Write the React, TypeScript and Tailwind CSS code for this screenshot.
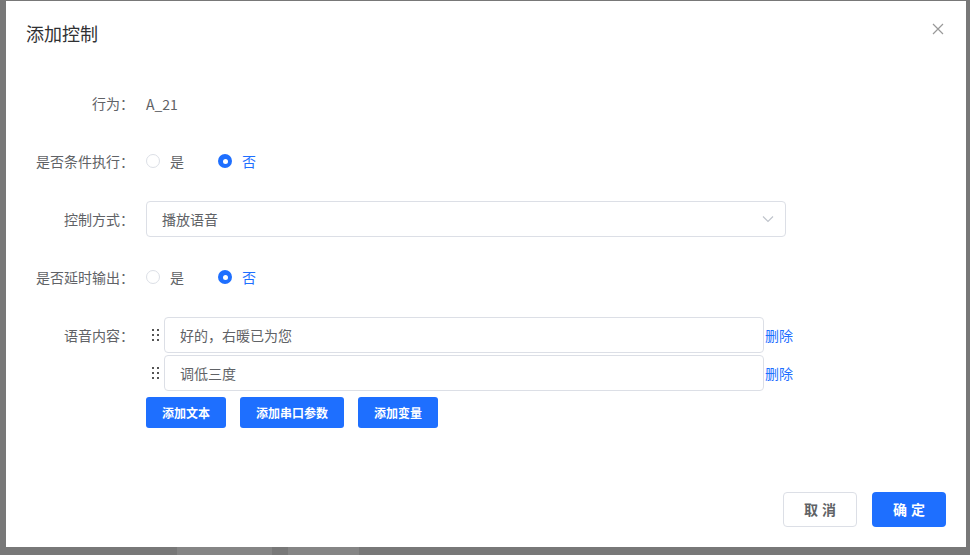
import { useState } from "react";

const font = { fontFamily: '"Noto Sans CJK SC", "Noto Sans", sans-serif' };

function Radio({ checked, label }: { checked: boolean; label: string }) {
  return (
    <label className="flex items-center mr-[34px] cursor-pointer">
      {checked ? (
        <span className="w-[14px] h-[14px] rounded-full bg-[#1e6fff] flex items-center justify-center">
          <span className="w-[5px] h-[5px] rounded-full bg-white" />
        </span>
      ) : (
        <span className="w-[14px] h-[14px] rounded-full border border-[#dcdfe6] bg-white" />
      )}
      <span className={`ml-[10px] text-[14px] ${checked ? "text-[#1e6fff]" : "text-[#606266]"}`}>{label}</span>
    </label>
  );
}

function DragHandle() {
  return (
    <div className="w-[18px] flex justify-center">
      <div className="grid grid-cols-2 gap-x-[3px] gap-y-[3px]">
        {[0, 1, 2, 3, 4, 5].map((i) => (
          <span key={i} className="w-[2px] h-[2px] bg-[#555]" />
        ))}
      </div>
    </div>
  );
}

function Row({ label, children, top }: { label: string; children: React.ReactNode; top?: boolean }) {
  return (
    <div className={`flex ${top ? "items-start" : "items-center"} min-h-[36px]`}>
      <div className={`w-[140px] pr-[12px] text-right text-[14px] text-[#606266] ${top ? "leading-[36px]" : ""}`}>{label}</div>
      <div className="flex-1">{children}</div>
    </div>
  );
}

export default function App() {
  const [items] = useState(["好的，右暖已为您", "调低三度"]);

  return (
    <div className="w-[970px] h-[555px] bg-[#787878] overflow-hidden" style={font}>
      <div className="ml-[6px] mt-[1px] w-[960px] h-[546px] bg-white flex flex-col">
        <div className="flex justify-between pl-[20px] pr-[22px] pt-[19px] h-[64px] items-start">
          <h2 className="text-[18px] leading-[26px] font-normal text-[#303133]">添加控制</h2>
          <button className="mt-[3px] text-[#999]">
            <svg width="12" height="12" viewBox="0 0 12 12" fill="none" stroke="#999" strokeWidth="1.2">
              <path d="M1 1L11 11M11 1L1 11" />
            </svg>
          </button>
        </div>

        <div className="mt-[20px] flex flex-col gap-[22px]">
          <Row label="行为：">
            <span className="text-[14px] text-[#606266]">A_21</span>
          </Row>
          <Row label="是否条件执行：">
            <div className="flex items-center">
              <Radio checked={false} label="是" />
              <Radio checked label="否" />
            </div>
          </Row>
          <Row label="控制方式：">
            <div className="w-[640px] h-[36px] border border-[#dcdfe6] rounded-[4px] flex items-center justify-between pl-[15px] pr-[11px]">
              <span className="text-[14px] text-[#606266]">播放语音</span>
              <svg width="12" height="8" viewBox="0 0 12 8" fill="none" stroke="#c0c4cc" strokeWidth="1.2">
                <path d="M1 1.5L6 6.5L11 1.5" />
              </svg>
            </div>
          </Row>
          <Row label="是否延时输出：">
            <div className="flex items-center">
              <Radio checked={false} label="是" />
              <Radio checked label="否" />
            </div>
          </Row>
          <Row label="语音内容：" top>
            <div className="flex flex-col gap-[2px]">
              {items.map((t) => (
                <div key={t} className="flex items-center">
                  <DragHandle />
                  <div className="w-[600px] h-[36px] border border-[#dcdfe6] rounded-[4px] flex items-center pl-[15px] text-[14px] text-[#606266]">
                    {t}
                  </div>
                  <span className="ml-[1px] text-[14px] text-[#1e6fff]">删除</span>
                </div>
              ))}
              <div className="flex gap-[14px] mt-[4px]">
                {["添加文本", "添加串口参数", "添加变量"].map((b) => (
                  <button key={b} className="h-[31px] px-[16px] rounded-[3px] bg-[#1e6fff] text-white text-[12px] font-bold">
                    {b}
                  </button>
                ))}
              </div>
            </div>
          </Row>
        </div>

        <div className="mt-auto mb-[20px] flex justify-end gap-[15px] pr-[20px]">
          <button className="w-[74px] h-[35px] border border-[#dcdfe6] rounded-[4px] bg-white text-[14px] font-bold text-[#606266] tracking-[4px] pl-[4px]">
            取消
          </button>
          <button className="w-[74px] h-[35px] rounded-[4px] bg-[#1e6fff] text-[14px] font-bold text-white tracking-[4px] pl-[4px]">
            确定
          </button>
        </div>
      </div>
      <div className="flex h-[8px]">
        <div className="ml-[177px] w-[95px] h-[8px] bg-[#858585]" />
        <div className="ml-[16px] w-[71px] h-[8px] bg-[#858585]" />
      </div>
    </div>
  );
}
